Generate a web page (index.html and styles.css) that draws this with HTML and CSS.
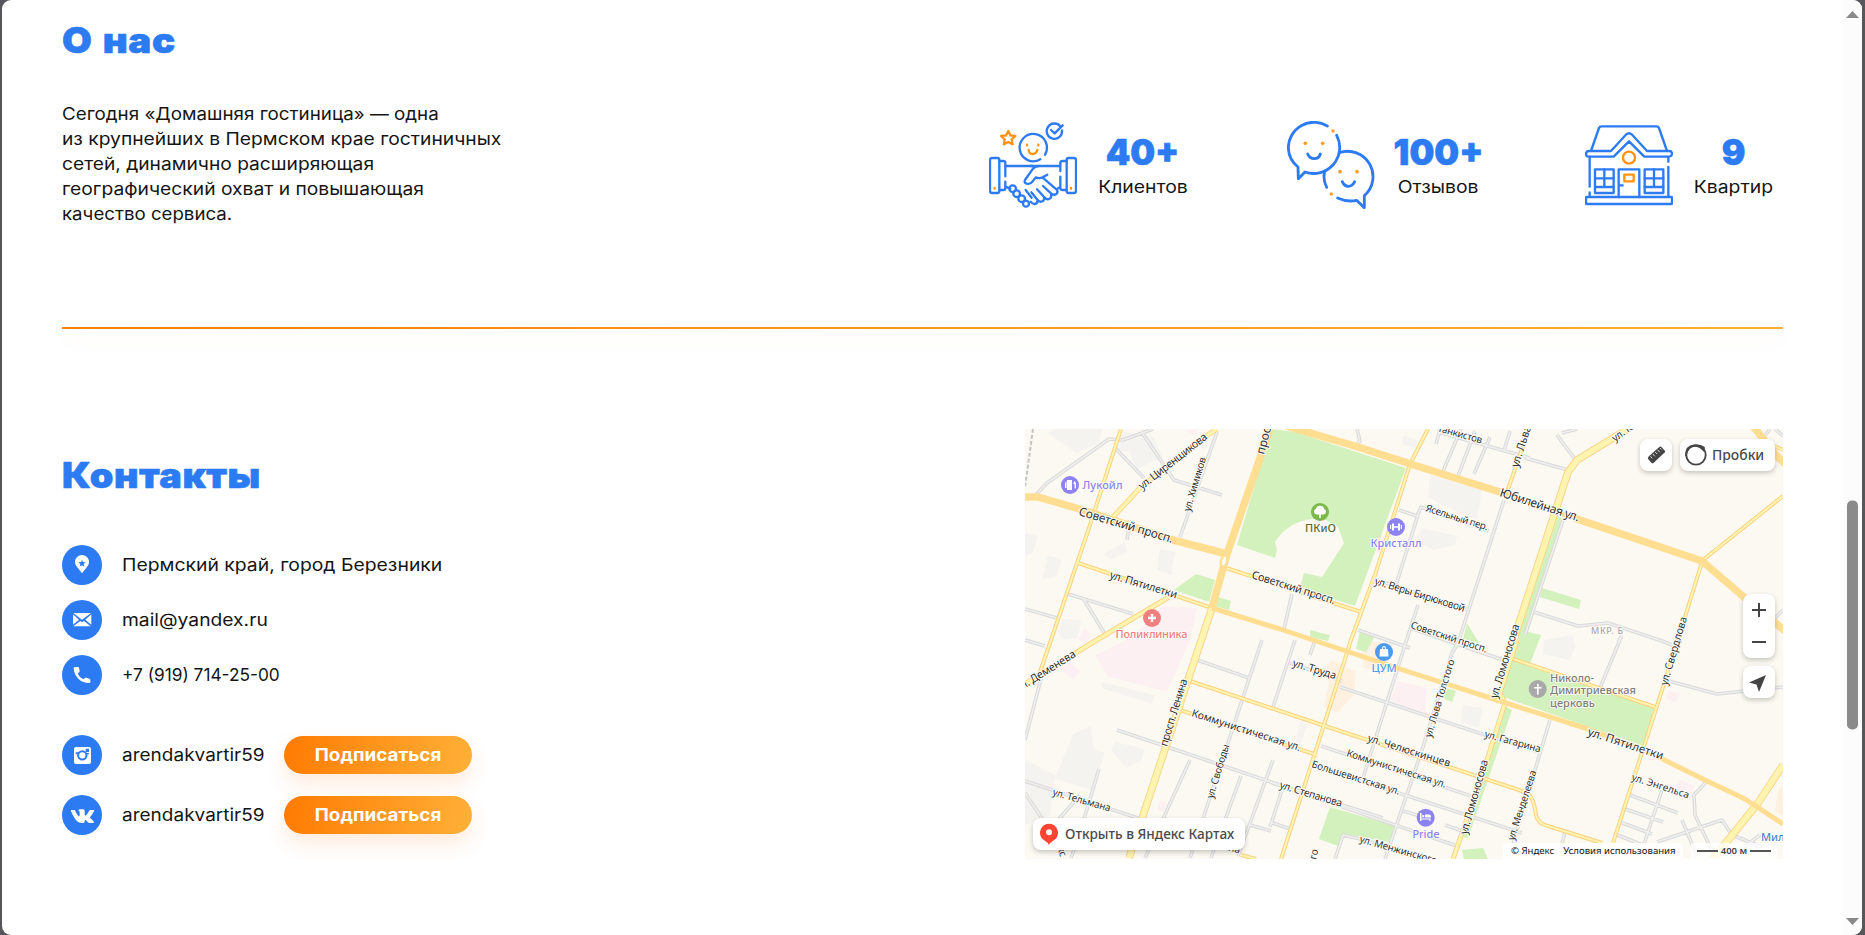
FILE: index.html
```html
<!DOCTYPE html>
<html lang="ru">
<head>
<meta charset="utf-8">
<title>Домашняя гостиница</title>
<link rel="stylesheet" href="styles.css">
</head>
<body>
<div class="window">
<main class="page">
  <section class="about">
    <h2 class="title title--about"><span class="wide">О нас</span></h2>
    <div class="about__row">
      <p class="about__text"><span class="wide l1">Сегодня «Домашняя гостиница» — одна</span><br><span class="wide l2">из крупнейших в Пермском крае гостиничных</span><br><span class="wide l3">сетей, динамично расширяющая</span><br><span class="wide l4">географический охват и повышающая</span><br><span class="wide l5">качество сервиса.</span></p>
      <ul class="stats">
        <li class="stat">
          <svg class="stat__icon" viewBox="57 63 264 264">
            <g class="line">
              <rect x="60" y="174" width="28" height="105" rx="6"/><path d="M88 183h12q6 0 6 6v40M106 245v18q0 7-6 7H88M106 198h164M106 260l15 6"/>
              <rect x="290" y="174" width="28" height="105" rx="6"/><path d="M290 183h-12q-7 0-7 6v24M271 230v33q0 7 7 7h12M271 261l-10 6"/>
              <path d="M211 178a41 41 0 1 1 14-14"/>
              <path d="M271 79a23 23 0 1 0 5 12M243 90l11 10 24-24"/>
              <path d="M188 198h-6M207 198q-11 0-18 8l-24 34q-4 8 5 11 11 3 18-7l9-12q12 5 21 0l14-8M218 233l42 36q6 7-1 13-8 5-16-2l-24-22M243 281q3 12-6 16-6 3-14-5l-22-24M223 292q0 12-9 13-7 1-12-6l-18-22M203 301q-1 11-10 11-6 0-11-7"/>
              <circle cx="128" cy="266" r="10"/><circle cx="140" cy="281" r="10"/><circle cx="155" cy="296" r="10"/><circle cx="168" cy="311" r="9"/><path d="M167 270l18 23"/>
            </g>
            <g class="line line--accent"><path d="M115 93l6 13 15 2-11 10 3 15-13-7-13 7 2-15-11-10 15-2z"/><path d="M171 134v2M205 134v2M176 150q1 12 12 12t14-12"/><path d="M74 264v2M303 264v2"/></g>
          </svg>
          <div class="stat__text stat__text--a"><b class="stat__num">40+</b><span class="stat__label">Клиентов</span></div>
        </li>
        <li class="stat">
          <svg class="stat__icon" viewBox="951 63 264 264">
            <g class="line line--bold"><path d="M1072 78A77 77 0 0 0 955 142A77 77 0 0 0 984 201l1 35 20-20a78 78 0 0 0 95-110"/><path d="M1013 162q6 14 20 14t18-14"/><path d="M1108 158a76 76 0 0 1 75 129v36l-23-22q-30 6-57-7M1070 262q-12-23-6-48"/><path d="M1117 245q6 14 18 14t19-14"/></g>
            <g class="dots"><circle cx="1006" cy="130" r="5.5"/><circle cx="1058" cy="130" r="5.5"/><circle cx="1089" cy="93" r="5"/><circle cx="1110" cy="215" r="5.5"/><circle cx="1161" cy="215" r="5.5"/><circle cx="1084" cy="282" r="5"/></g>
          </svg>
          <div class="stat__text stat__text--b"><b class="stat__num">100+</b><span class="stat__label">Отзывов</span></div>
        </li>
        <li class="stat">
          <svg class="stat__icon" viewBox="645 63 264 264">
            <g class="line"><path d="M664 150l23-66q2-5 8-5h164q6 0 8 5l23 66"/><path d="M656 153h67l46-50q8-7 16 0l46 50h67q8 0 8 8t-8 9h-75l-46-46-46 46h-75q-8 0-8-8t8-9z"/><path d="M659 172v88M659 277v12M895 172v13M895 201v88"/><rect x="648" y="291" width="258" height="21" rx="2"/><path d="M746 291v-83h62v83M751 256h7"/>
            <rect x="675" y="208" width="56" height="71"/><path d="M703 208v53M675 235h56M675 261h56"/><rect x="824" y="208" width="56" height="71"/><path d="M852 208v53M824 235h56M824 261h56"/></g>
            <g class="line line--accent"><circle cx="777" cy="173" r="18"/><rect x="763" y="224" width="28" height="20"/></g>
          </svg>
          <div class="stat__text stat__text--c"><b class="stat__num">9</b><span class="stat__label">Квартир</span></div>
        </li>
      </ul>
    </div>
  </section>
  <hr class="rule">
  <section class="contacts">
    <div class="contacts__info">
      <h2 class="title title--contacts"><span class="wide">Контакты</span></h2>
      <ul class="list">
        <li class="item"><svg class="badge" viewBox="66 315 120 120"><circle class="badge__bg" cx="126" cy="375" r="60"/><path class="badge__fg" d="M126 400l-17-22a21 21 0 1 1 34 0z"/><path class="badge__bg" d="M126 359l3 7 8 1-6 5 2 8-7-4-7 4 2-8-6-5 8-1z"/></svg><span class="wide t1">Пермский край, город Березники</span></li>
        <li class="item"><svg class="badge" viewBox="66 480 120 120"><circle class="badge__bg" cx="126" cy="540" r="60"/><path class="badge__fg" d="M100 519h53l-27 20zM99 523l18 16-18 15zM154 523v31l-18-15zM121 543l5 4 6-4 20 16h-52z"/></svg><span class="wide t2">mail@yandex.ru</span></li>
        <li class="item"><svg class="badge" viewBox="66 645 120 120"><circle class="badge__bg" cx="126" cy="705" r="60"/><path class="badge__fg" d="M103 682l11-1q2 0 3 3l2 9q0 2-2 4l-4 4q6 12 17 17l5-4q2-2 4-1l9 3q3 1 3 3v7q0 3-3 3-20 0-33-13t-14-32q0-2 2-2z"/></svg><span class="t3">+7 (919) 714-25-00</span></li>
      </ul>
      <ul class="list list--social">
        <li class="item"><svg class="badge" viewBox="66 885 120 120"><circle class="badge__bg" cx="126" cy="945" r="60"/><rect class="badge__fg" x="102" y="921" width="51" height="51" rx="6"/><path class="badge__bg" d="M107 937h11v6h-11zM137 926h10v10h-10zM138 939h9v4h-9z"/><circle class="badge__bg" cx="127" cy="946" r="15.500"/><circle class="badge__fg" cx="127" cy="946" r="9.500"/></svg><span class="t4"><i class="wide">arendakvartir59</i></span><a class="btn"><b>Подписаться</b></a></li>
        <li class="item"><svg class="badge" viewBox="66 1065 120 120"><circle class="badge__bg" cx="126" cy="1125" r="60"/><path class="badge__fg" d="M94 1110h9q2 0 3 3 5 13 10 16 3 1 3-4v-8q0-5-4-6 1-3 6-3h9q4 0 4 5v12q2 3 5 0 5-5 8-12 1-3 4-3h9q4 0 2 4-3 7-11 16-2 2 0 4l9 9q4 5-2 6h-9q-3 0-5-2l-6-6q-4-3-4 2 0 6-4 6h-4q-12 0-21-13-7-9-12-22-1-4 1-4z"/></svg><span class="t4"><i class="wide">arendakvartir59</i></span><a class="btn"><b>Подписаться</b></a></li>
      </ul>
    </div>
    <div class="map">
      <svg class="map__canvas" viewBox="1025 429 758 430" width="758" height="430">
        <g class="bld">
          <path d="M1055 429h47l-3 14-22 10-30-20zM1112 450l12-18 30 5 8 20-25 12-8-17zM1110 550l15-8 2 10-16 8-7-6zM1160 549l15 3-4 23-14-5zM1048 556l14 3-6 18-14 2zM1063 619l18 1-3 18-15 2-5-8zM1025 533l13 3-6 18-7 1zM1102 682l52 13-2 9-50-16zM1073 734l18-8 2 22 12 5-13 37-37-11zM1115 742l30 7-4 12-15 7-15-18zM1025 760l30 15-5 40-25 10zM1404 436l14 4-3 9-13-5zM1430 475l52 14-5 32-49-23zM1422 528l35 8-2 9-22 5-18-10zM1463 705l19 3-3 20-18-6zM1544 640l28-5 3 12-6 13-26-6zM1300 722l7 2-7 23-5-2z"/>
        </g>
        <path class="pink" d="M1163 606l34 2-7 32-23 52-60-16-12-21 36-17zM1185 431l12-2-1 6zM1085 628l7 8-8 8-6-5zM1067 661l14 10-8 8-12-9zM1397 681l30 7-2 25-35-11zM1669 691l11 3-4 8-11-4zM1680 780l15 6-5 14-16-5zM1160 800l7 3-4 9-6-2z"/>
        <path class="warm" d="M1332 660l24 12-2 22-16 18-14-5 5-25-5-14zM1360 640l33 4-7 30-22-6zM1778 790l5-4v30l-8-5z"/>
        <g class="green">
          <path d="M1271 429l24 3 111 36-51 138-55-18 4-15 18 4 22-34-6-16-16-9q-33 1-47 24l2 8-2 8-38-13z"/>
          <path d="M1174 590l22-16 19 6-6 22zM1218 597l13 4-2 9-14-4zM1310 630l20 5-2 6-18-4zM1360 631l15 5-9 16-10-3zM1467 623l12 20-16-4zM1558 516l5 4-35 112 13 3-11 29 125 42-11 40-144-50 15-50zM1542 588l39 12-2 9-39-12zM1447 688l9 3-4 11-10-4zM1330 807l65 19-6 16-44-8-7 12-19-7zM1505 706l7 4-44 128-5-1zM1462 850l21-2 5 11h-24z"/>
        </g>
        <g id="streets">
          <g class="g-case">
            <path id="gray" d="M1035 496l12-13 62-44 14 1 30-11M1116 449l28 29M1141 431l33 49 48 15M1217 432l-37 105M1130 520l-3 20M1068 594l65 20M1083 598l22 36M1025 609l32 9M1025 640l20 6M1042 675l-17 65M1117 730l166 56 100 32M1262 640l-43 130-29 88M1197 660l52 18M1295 640l-22 67M1190 760l-45 98M1241 776l-30 82M1273 760l-35 96M1250 825l21 6M1025 781l140 46M1099 769l-18 60-10 29M1025 793l20 30-10 20M1080 795l-22 25M1357 429l3 12-5 5M1440 429l-4 15M1461 429l-18 42M1475 431l-17 45M1490 437l-16 37M1438 432l92 26M1510 431l-6 20M1399 510l18 6 4-9 68 24M1418 515l-22 70M1504 500l-46 143-6 10-29 94-38 112M1377 580l92 30M1418 605l-13 40-42 133M1358 630l52 18M1410 628l93 32M1290 663l52 18M1340 687l145 48 55 17M1321 746l150 50M1270 782l125 43 65 22M1312 765l210 68M1292 594l-8 35M1315 640l-5 15M1335 859l8-24 25 6 70 22M1270 822l20 7M1283 787l-13 40M1403 811l17 5M1445 825l20 7M1525 458l43 12M1557 435l20 27M1562 433l15-4M1563 520l-38 115M1534 612l44 14 30-3 54 18 12 5M1618 642l4-6M1665 680l52 14 66-7M1620 640l-20 48M1550 720l-30 100-11 38M1630 795l48 18M1625 809l38 13M1620 822l32 12M1615 834l30 12M1662 790l-20 60M1706 782l-12 13 1 20 18 38M1682 820l15 36M1657 842l65-22 10 15 30 12M1740 850l20-15M1783 610l-12 12M1760 442l10-13M1775 429l8 7M1565 832l-5 20"/>
          </g>
          <use href="#gray" class="g-fill"/>
          <path class="rail" d="M1033 429l-8 58"/>
          <g class="y-case"><path id="thin" d="M1121 429l-31 96-40 118-11 32M1078 563l134 45M1428 429l-18 35-34 108-25 68-28 88-42 131M1529 429l-22 63M1223 567l138 45M1187 680l138 46 200 66M1180 710l137 45M1510 658l145 49M1703 560l80-64M1702 562l-17 55-22 70-50 156M1528 793q6 6 8 22 2 9 12 11l54 17M1241 855l15 4M1768 443l15 7"/></g>
          <use href="#thin" class="y-fill"/>
          <g class="y-case y-case--mid"><path id="mid" d="M1217 429l-17 11-60 48-27 29M1169 597l-74 44-70 43M1517 640l-17 53 5 10-22 70-30 86"/></g>
          <use href="#mid" class="y-fill y-fill--mid"/>
          <g class="y-case y-case--wide"><path id="wide" d="M1628 429l-51 31-9 12-43 133-10 30M1212 608l-45 135-38 115M1783 765l-25 38-45 56"/></g>
          <use href="#wide" class="y-fill y-fill--wide"/>
          <path class="orange" d="M1025 497h13l45 13 90 30 54 14M1270 429l-43 125-15 54"/>
          <path class="orange orange--thin" d="M1500 492l80 28M1212 608l68 21 123 41 100 32 85 27 54 20 63 31 40 19 38 25"/>
          <path class="orange" d="M1286 426l72 21 62 20 80 25M1574 518l128 43 43 37 40 33M1753 426l22 28 10 10"/>
          <ellipse cx="1224" cy="561" rx="3" ry="6" fill="#fff" stroke="#ffdf93" stroke-width="2.5" transform="rotate(15 1224 561)"/>
        </g>
        <g class="lbl">
          <text transform="translate(1078 515) rotate(16.6)" textLength="98" font-size="12">Советский просп.</text>
          <text transform="translate(1109 578) rotate(17)" textLength="70" font-size="11">ул. Пятилетки</text>
          <text transform="translate(1142 490) rotate(-38)" textLength="84" font-size="11">ул. Циренщикова</text>
          <text transform="translate(1190 512) rotate(-73.3)" textLength="56" font-size="10">ул. Химиков</text>
          <text transform="translate(1264 455) rotate(-75)" font-size="12">просп. Ленина</text>
          <text transform="translate(1251 578) rotate(17.5)" textLength="87" font-size="11">Советский просп.</text>
          <text transform="translate(1425 511) rotate(17.5)" textLength="65" font-size="10">Ясельный пер.</text>
          <text transform="translate(1437 431) rotate(16)" textLength="46" font-size="10">Танкистов</text>
          <text transform="translate(1518 468) rotate(-72)" font-size="11">ул. Льва Толстого</text>
          <text transform="translate(1499 496) rotate(17.8)" textLength="83" font-size="12">Юбилейная ул.</text>
          <text transform="translate(1374 584) rotate(17.3)" textLength="94" font-size="10.5">ул. Веры Бирюковой</text>
          <text transform="translate(1410 628) rotate(18)" textLength="80" font-size="10">Советский просп.</text>
          <text transform="translate(1667 686) rotate(-73.5)" textLength="71" font-size="10.5">ул. Свердлова</text>
          <text transform="translate(1497 699) rotate(-73)" textLength="77" font-size="11">ул. Ломоносова</text>
          <text transform="translate(1467 835) rotate(-74)" textLength="77" font-size="11">ул. Ломоносова</text>
          <text transform="translate(1431 738) rotate(-73)" textLength="81" font-size="10">ул. Льва Толстого</text>
          <text transform="translate(1514 841) rotate(-72)" textLength="73" font-size="10">ул. Менделеева</text>
          <text transform="translate(1292 666) rotate(17)" textLength="45" font-size="10.5">ул. Труда</text>
          <text transform="translate(1019 692) rotate(-32)" textLength="68" font-size="11">ул. Деменева</text>
          <text transform="translate(1167 747) rotate(-73)" textLength="70" font-size="11">просп. Ленина</text>
          <text transform="translate(1191 716) rotate(17.9)" textLength="114" font-size="10.5">Коммунистическая ул.</text>
          <text transform="translate(1213 799) rotate(-73)" textLength="56" font-size="10">ул. Свободы</text>
          <text transform="translate(1052 795) rotate(16)" textLength="60" font-size="10">ул. Тельмана</text>
          <text transform="translate(1367 741) rotate(17.4)" textLength="86" font-size="10.5">ул. Челюскинцев</text>
          <text transform="translate(1346 756) rotate(17.8)" textLength="104" font-size="10">Коммунистическая ул.</text>
          <text transform="translate(1311 767) rotate(17.6)" textLength="92" font-size="10">Большевистская ул.</text>
          <text transform="translate(1279 788) rotate(17)" textLength="65" font-size="10.5">ул. Степанова</text>
          <text transform="translate(1359 842) rotate(16)" textLength="80" font-size="10">ул. Менжинского</text>
          <text transform="translate(1484 737) rotate(15.5)" textLength="58" font-size="10">ул. Гагарина</text>
          <text transform="translate(1587 735) rotate(18.2)" textLength="79" font-size="11.5">ул. Пятилетки</text>
          <text transform="translate(1631 780) rotate(18)" textLength="60" font-size="10">ул. Энгельса</text>
          <text transform="translate(1615 442) rotate(-36)" font-size="10">ул. Юбилейная</text>
          <text transform="translate(1222 849) rotate(14)" font-size="10">ина</text>
          <text transform="translate(1057 848) rotate(70)" font-size="10">кс</text>
          <text transform="translate(1316 860) rotate(-78)" font-size="10">го</text>
        </g>
        <g class="poi">
          <text x="1591" y="634" textLength="32" font-size="9" fill="#aaa9a7">МКР. Б</text>
          <g fill="#8d82f2"><circle cx="1070" cy="485" r="9"/><text x="1082.500" y="489" textLength="40">Лукойл</text><circle cx="1396" cy="527" r="9"/><text x="1370.500" y="547" textLength="51">Кристалл</text><circle cx="1425.700" cy="817.700" r="9"/><text x="1412.500" y="838" textLength="27">Pride</text></g>
          <g fill="#7db84d"><circle cx="1320" cy="512" r="9"/></g><text x="1305" y="532" textLength="31" fill="#496b3b">ПКиО</text>
          <g fill="#f08080"><circle cx="1152" cy="618" r="9"/><text x="1115.500" y="638" textLength="72">Поликлиника</text></g>
          <g fill="#4b9bf5"><circle cx="1384" cy="652" r="9"/><text x="1371.500" y="671.500" textLength="25">ЦУМ</text><text x="1761" y="841" fill="#4a86d8">Мил</text></g>
          <g fill="#807f7e"><circle cx="1537.700" cy="689" r="9" fill="#a9a8ab"/><text x="1550" y="681.500" textLength="44">Николо-</text><text x="1550" y="694" textLength="86">Димитриевская</text><text x="1550" y="706.500" textLength="45">церковь</text></g>
          <g fill="#fff">
            <path d="M1067 480h5v10h-5zM1065 483l1.500-2v7h-1.500zM1073 484h1.500v4q1 1 1.500 0v-5l-1.500-2"/>
            <path d="M1319.200 518v-3.500h-2.700a2.800 2.800 0 0 1-.8-5.400 4.400 4.400 0 0 1 8.600 0 2.800 2.800 0 0 1-.8 5.400h-2.700v3.500z"/>
            <path d="M1392 523.500h2v2.700h4v-2.700h2v7h-2v-2.700h-4v2.700h-2zM1390 525h1.200v4h-1.200zM1400.800 525h1.200v4h-1.200z"/>
            <path d="M1150.800 614h2.400v2.800h2.800v2.400h-2.800v2.800h-2.400v-2.800h-2.800v-2.400h2.800z"/>
            <path d="M1380 649h8l.5 7.500h-9zM1382 649q0-3 2-3t2 3h-1q0-2-1-2t-1 2z"/>
            <path d="M1537 684h1.700v3h2.800v1.600h-2.800v6h-1.700v-6h-2.800v-1.600h2.800z"/>
            <path d="M1420 813h1.500v5.500h9v2.500h-1.200v-1.500h-7.800v1.500h-1.500zM1425 814.500h4q2 0 2 2v1h-6zM1422.200 815h2v2.300h-2z"/>
          </g>
        </g>
      </svg>
      <div class="ctl ctl--ruler"><svg viewBox="365 60 56 60" width="19" height="20"><path d="M368 96l34-31q3-2 6 1l10 11q2 3 0 5l-34 32q-3 2-6 0l-10-12q-2-3 0-6z" fill="#444"/><path d="M375 94l5 6M382 87l6 7M389 81l6 6M396 74l7 8M403 69l5 5" stroke="#fff" stroke-width="2.500"/></svg></div>
      <div class="ctl ctl--traffic"><svg width="24" height="24" viewBox="0 0 24 24"><circle cx="12" cy="12" r="9.700" fill="none" stroke="#444" stroke-width="1.800"/><path d="M1 13Q1 2 10 1.500q8-.5 11 3L20 9Q15 3 9 4 4 5 2.500 13z" fill="#444"/></svg><span class="ctl__traffic">Пробки</span></div>
      <div class="ctl ctl--zoom"><svg width="32" height="64" viewBox="0 0 32 64"><path d="M9 16h14M16 9v14M9 48h14" stroke="#444" stroke-width="2"/></svg></div>
      <div class="ctl ctl--geo"><svg width="32" height="32" viewBox="0 0 32 32"><path d="M6 16.500L23 9 16 26l-2.500-7.500z" fill="#444"/></svg></div>
      <div class="ctl ctl--open"><svg width="18" height="22" viewBox="0 0 18 22"><path d="M9 22q-1-2.500-4.500-4.500A9 9 0 1 1 13.500 17.500Q10 19.500 9 22z" fill="#ff4433"/><circle cx="9" cy="9.200" r="3" fill="#fff"/></svg><span class="ctl__open">Открыть в Яндекс Картах</span></div>
      <div class="copy"><span class="copy__a">© Яндекс</span><span class="copy__b">Условия использования</span></div>
      <div class="scale"><i></i><span>400 м</span><i></i></div>
    </div>
  </section>
</main>
<aside class="scroll"><svg width="19" height="935" viewBox="0 0 19 935"><path d="M3 18l6.500-7 6.500 7zM3 918l6.500 7 6.500-7z" fill="#8a8a8a"/><rect x="4" y="500.500" width="11" height="229" rx="5" fill="#8a8a8a"/></svg></aside>
</div>
</body>
</html>
```
FILE: styles.css
```css
* { box-sizing: border-box; }
body { margin: 0; height: 935px; overflow: hidden; background: #56565b; font-family: Inter, "Open Sans", sans-serif; color: #151515; }
ul { list-style: none; margin: 0; padding: 0; }
.window { display: flex; margin: 0 3px 0 2px; height: 935px; background: #fff; border-radius: 9px; overflow: hidden; }
.page { flex: 1; padding: 0 60px; }
.scroll { width: 19px; background: #fcfcfc; }
.wide { display: inline-block; font-style: normal; transform-origin: 0 50%; transform: scaleX(1.1); }
.title { margin: 0; font-size: 35px; line-height: 44px; font-weight: 900; color: #2c7bf2; letter-spacing: 0.5px; -webkit-text-stroke: 0.6px #2c7bf2; }
.title--about { word-spacing: 2px; }
.title--contacts .wide { transform: scaleX(1.08); }
.about { height: 327px; padding-top: 18px; }
.about__row { display: flex; justify-content: space-between; margin-top: 39px; }
.about__text { margin: 0; font-size: 17.3px; line-height: 25px; white-space: nowrap; }
.l1 { transform: scaleX(1.087); }
.l2 { transform: scaleX(1.113); }
.l3 { transform: scaleX(1.11); }
.l4 { transform: scaleX(1.114); }
.l5 { transform: scaleX(1.08); }
.stats { display: grid; grid-template-columns: repeat(3, 298px); width: 794px; margin-top: 20px; }
.stat { display: flex; gap: 20px; height: 88px; }
.stat__icon { width: 88px; height: 88px; }
.stat__text { display: flex; flex-direction: column; align-items: center; white-space: nowrap; padding-top: 10px; }
.stat__text--a { width: 91px; }
.stat__text--b { width: 87px; }
.stat__text--c { width: 81px; }
.stat__num { font-size: 35px; line-height: 43px; font-weight: 900; color: #2c7bf2; -webkit-text-stroke: 0.6px #2c7bf2; }
.stat__label { font-size: 17.3px; line-height: 25px; transform: scaleX(1.12); }
.line { fill: none; stroke: #2c7bf2; stroke-width: 7; stroke-linecap: round; stroke-linejoin: round; }
.line--bold { stroke-width: 8.5; }
.line--accent { stroke: #ff9412; }
.dots { fill: #ff9d25; }
.rule { height: 2px; margin: 0; border: 0; background: linear-gradient(90deg, #ff7f08, #ffae35); box-shadow: 0 10px 20px rgba(255, 140, 40, 0.12); }
.contacts { display: flex; justify-content: space-between; padding-top: 100px; }
.contacts__info { padding-top: 24px; }
.list { display: grid; gap: 15px; margin-top: 48px; }
.list--social { gap: 20px; margin-top: 40px; }
.item { display: flex; align-items: center; height: 40px; font-size: 17.3px; white-space: nowrap; }
.item span { margin-left: 20px; padding-bottom: 1.5px; }
.badge { width: 40px; height: 40px; }
.badge__bg { fill: #2c7bf2; }
.badge__fg { fill: #fff; }
.t1 { transform: scaleX(1.12); }
.t2 { transform: scaleX(1.114); }
.t4 { width: 142px; }
.btn { display: flex; align-items: center; justify-content: center; width: 188px; height: 38px; padding-bottom: 2px; margin-left: 20px; border-radius: 19px; background: linear-gradient(100deg, #ff7b02, #ffb038); box-shadow: 0 10px 20px rgba(255, 130, 50, 0.16); color: #fff; font-size: 17.3px; }
.btn b { font-weight: 700; transform: scaleX(1.09); }
.map { position: relative; width: 758px; height: 430px; overflow: hidden; background: #fcf9f2; font-family: "Noto Sans", "Open Sans", sans-serif; }
.map__canvas { display: block; }
.bld { fill: #f4f3ef; }
.pink { fill: #fdf0f2; }
.warm { fill: #fff0e0; }
.green { fill: #d3f1bc; }
.g-case { fill: none; stroke: #d9d9d9; stroke-width: 3.6; }
.g-fill { fill: none; stroke: #efefee; stroke-width: 1.6; }
#gray, #thin, #mid, #wide { stroke: inherit; fill: none; stroke-linejoin: round; }
.y-case { stroke: #fbcf7c; stroke-width: 4; }
.y-fill { stroke: #fff3b0; stroke-width: 2.2; }
.y-case--mid { stroke-width: 5; }
.y-fill--mid { stroke-width: 3.4; }
.y-case--wide { stroke-width: 7.6; }
.y-fill--wide { stroke-width: 6; }
.rail { fill: none; stroke: #c4c4c4; stroke-width: 2; stroke-dasharray: 4 2; }
.orange { fill: none; stroke: #ffdd91; stroke-width: 7.5; stroke-linejoin: round; }
.orange--thin { stroke-width: 5; }
.lbl { fill: #303030; stroke: #fffdf8; stroke-width: 2; paint-order: stroke; }
.poi { font-size: 11px; font-weight: 500; }
.poi text { stroke: #fffdf8; stroke-width: 1.6; paint-order: stroke; }
.ctl { position: absolute; display: flex; align-items: center; background: #fff; border-radius: 8px; box-shadow: 0 2px 5px rgba(0, 0, 0, 0.22); color: #4a4a4a; white-space: nowrap; }
.ctl--ruler { left: 615px; top: 10px; width: 32px; height: 32px; justify-content: center; }
.ctl--traffic { left: 655px; top: 10px; width: 95px; height: 32px; padding: 0 0 1px 4px; gap: 4px; font-size: 13.9px; font-weight: 500; }
.ctl--zoom { left: 718px; top: 165px; width: 32px; height: 64px; }
.ctl--geo { left: 718px; top: 237px; width: 32px; height: 32px; }
.ctl--open { left: 8px; top: 389px; width: 212px; height: 32px; padding: 0 0 1px 7px; gap: 7px; font-size: 13.6px; font-weight: 500; }
.copy { position: absolute; left: 478px; top: 414px; width: 180px; height: 16px; padding-left: 8px; display: flex; gap: 9px; align-items: center; background: rgba(255, 255, 255, 0.9); border-radius: 4px 4px 0 0; color: #111; font-size: 9.6px; line-height: 16px; white-space: nowrap; }
.scale { position: absolute; left: 666px; top: 414px; width: 86px; height: 16px; display: flex; gap: 3px; align-items: center; justify-content: center; background: rgba(255, 255, 255, 0.75); font-size: 9.5px; line-height: 16px; font-weight: 600; color: #444; white-space: nowrap; }
.scale i { width: 21px; height: 2px; background: #555; }
```
